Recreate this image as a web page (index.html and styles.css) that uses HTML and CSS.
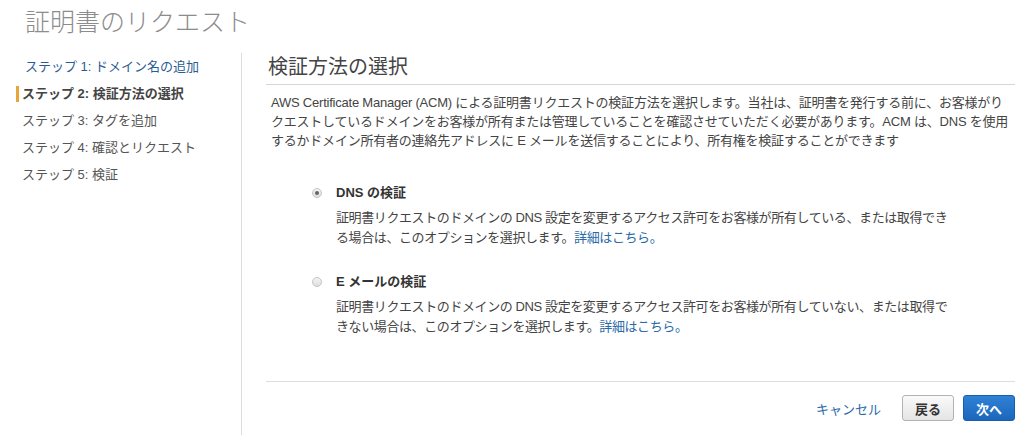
FILE: index.html
```html
<!DOCTYPE html>
<html lang="ja">
<head>
<meta charset="utf-8">
<title>証明書のリクエスト</title>
<link rel="stylesheet" href="styles.css">
</head>
<body>
<header class="page-header">
  <h1 class="page-title">証明書のリクエスト</h1>
</header>
<div class="wizard">
  <nav class="steps">
    <a class="step step-link" href="#">ステップ 1: ドメイン名の追加</a>
    <div class="step step-active">ステップ 2: 検証方法の選択</div>
    <div class="step">ステップ 3: タグを追加</div>
    <div class="step">ステップ 4: 確認とリクエスト</div>
    <div class="step">ステップ 5: 検証</div>
  </nav>
  <main class="panel">
    <h2 class="panel-title">検証方法の選択</h2>
    <p class="intro">AWS Certificate Manager (ACM) による証明書リクエストの検証方法を選択します。当社は、証明書を発行する前に、お客様がり<br>クエストしているドメインをお客様が所有または管理していることを確認させていただく必要があります。ACM は、DNS を使用<br>するかドメイン所有者の連絡先アドレスに E メールを送信することにより、所有権を検証することができます</p>

    <div class="options">
      <div class="option option-first">
        <div class="option-head">
          <span class="radio radio-checked"></span>
          <span class="option-label">DNS の検証</span>
        </div>
        <p class="option-desc">証明書リクエストのドメインの DNS 設定を変更するアクセス許可をお客様が所有している、または取得でき<br>る場合は、このオプションを選択します。<a class="link" href="#">詳細はこちら。</a></p>
      </div>
      <div class="option option-second">
        <div class="option-head">
          <span class="radio"></span>
          <span class="option-label">E メールの検証</span>
        </div>
        <p class="option-desc">証明書リクエストのドメインの DNS 設定を変更するアクセス許可をお客様が所有していない、または取得で<br>きない場合は、このオプションを選択します。<a class="link" href="#">詳細はこちら。</a></p>
      </div>
    </div>

    <div class="actions">
      <a class="cancel" href="#">キャンセル</a>
      <button class="btn btn-back" type="button">戻る</button>
      <button class="btn btn-next" type="button">次へ</button>
    </div>
  </main>
</div>
</body>
</html>
```
FILE: styles.css
```css
html, body {
  margin: 0;
  padding: 0;
  background: #ffffff;
}

body {
  font-family: "Liberation Sans", "Noto Sans CJK JP", sans-serif;
  font-size: 13px;
  color: #444444;
  width: 1025px;
  height: 435px;
  overflow: hidden;
}

.page-header {
  height: 53px;
  padding-left: 25px;
}

.page-title {
  margin: 0;
  padding-top: 6px;
  font-size: 25px;
  line-height: 32px;
  font-weight: 300;
  color: #8c8c8c;
}

.wizard {
  display: flex;
  height: 382px;
}

.steps {
  width: 241px;
  flex: none;
  border-right: 1px solid #dcdcdc;
  display: flex;
  flex-direction: column;
}

.step {
  display: block;
  line-height: 27px;
  height: 27px;
  padding-left: 22px;
  color: #555555;
  font-size: 13px;
  text-decoration: none;
  position: relative;
}

.step-link {
  color: #2a5c92;
  padding-left: 25px;
}

.step-active {
  font-weight: bold;
  color: #444444;
}

.step-active::before {
  content: "";
  position: absolute;
  left: 16px;
  top: 6px;
  width: 3px;
  height: 16px;
  background: #e7a53a;
}

.panel {
  flex: 1;
  padding: 0 10px 0 24px;
  display: flex;
  flex-direction: column;
  min-width: 0;
}

.panel-title {
  margin: 0;
  padding: 0 0 3px 2px;
  font-size: 20px;
  line-height: 28px;
  font-weight: normal;
  color: #444444;
  border-bottom: 1px solid #d6d6d6;
}

.intro {
  margin: 8px -10px 0 0;
  padding-left: 5px;
  line-height: 19px;
  color: #444444;
  letter-spacing: -0.22px;
  white-space: nowrap;
}

.options {
  padding-left: 46px;
}

.option-first {
  margin-top: 33px;
}

.option-second {
  margin-top: 25px;
}

.option-head {
  display: flex;
  align-items: center;
  height: 19px;
}

.radio {
  width: 10px;
  height: 10px;
  box-sizing: border-box;
  border-radius: 50%;
  border: 1px solid #c4c4c4;
  background: linear-gradient(#f4f4f4, #dedede);
  margin-right: 14px;
  display: flex;
  align-items: center;
  justify-content: center;
  flex: none;
}

.radio-checked::after {
  content: "";
  width: 4px;
  height: 4px;
  border-radius: 50%;
  background: #666666;
}

.option-label {
  font-weight: bold;
  color: #333333;
  line-height: 19px;
}

.option-desc {
  margin: 6px 0 0 24px;
  line-height: 19.5px;
  color: #444444;
  letter-spacing: -0.4px;
  white-space: nowrap;
}

.link {
  color: #2b6aa8;
  text-decoration: none;
}

.actions {
  margin-top: auto;
  margin-bottom: 14px;
  border-top: 1px solid #dedede;
  padding-top: 13px;
  display: flex;
  justify-content: flex-end;
  align-items: center;
}

.cancel {
  color: #2b6aa8;
  text-decoration: none;
  margin-right: 21px;
  font-size: 13px;
}

.btn {
  height: 26px;
  width: 52px;
  border-radius: 3px;
  font-family: "Liberation Sans", "Noto Sans CJK JP", sans-serif;
  font-size: 13px;
  font-weight: bold;
  padding: 0;
  cursor: pointer;
}

.btn-back {
  background: linear-gradient(#fafafa, #e4e4e4);
  border: 1px solid #b3b3b3;
  color: #333333;
  margin-right: 9px;
}

.btn-next {
  background: linear-gradient(#2f82d6, #1b66bd);
  border: 1px solid #1a5ea9;
  color: #ffffff;
}
```
